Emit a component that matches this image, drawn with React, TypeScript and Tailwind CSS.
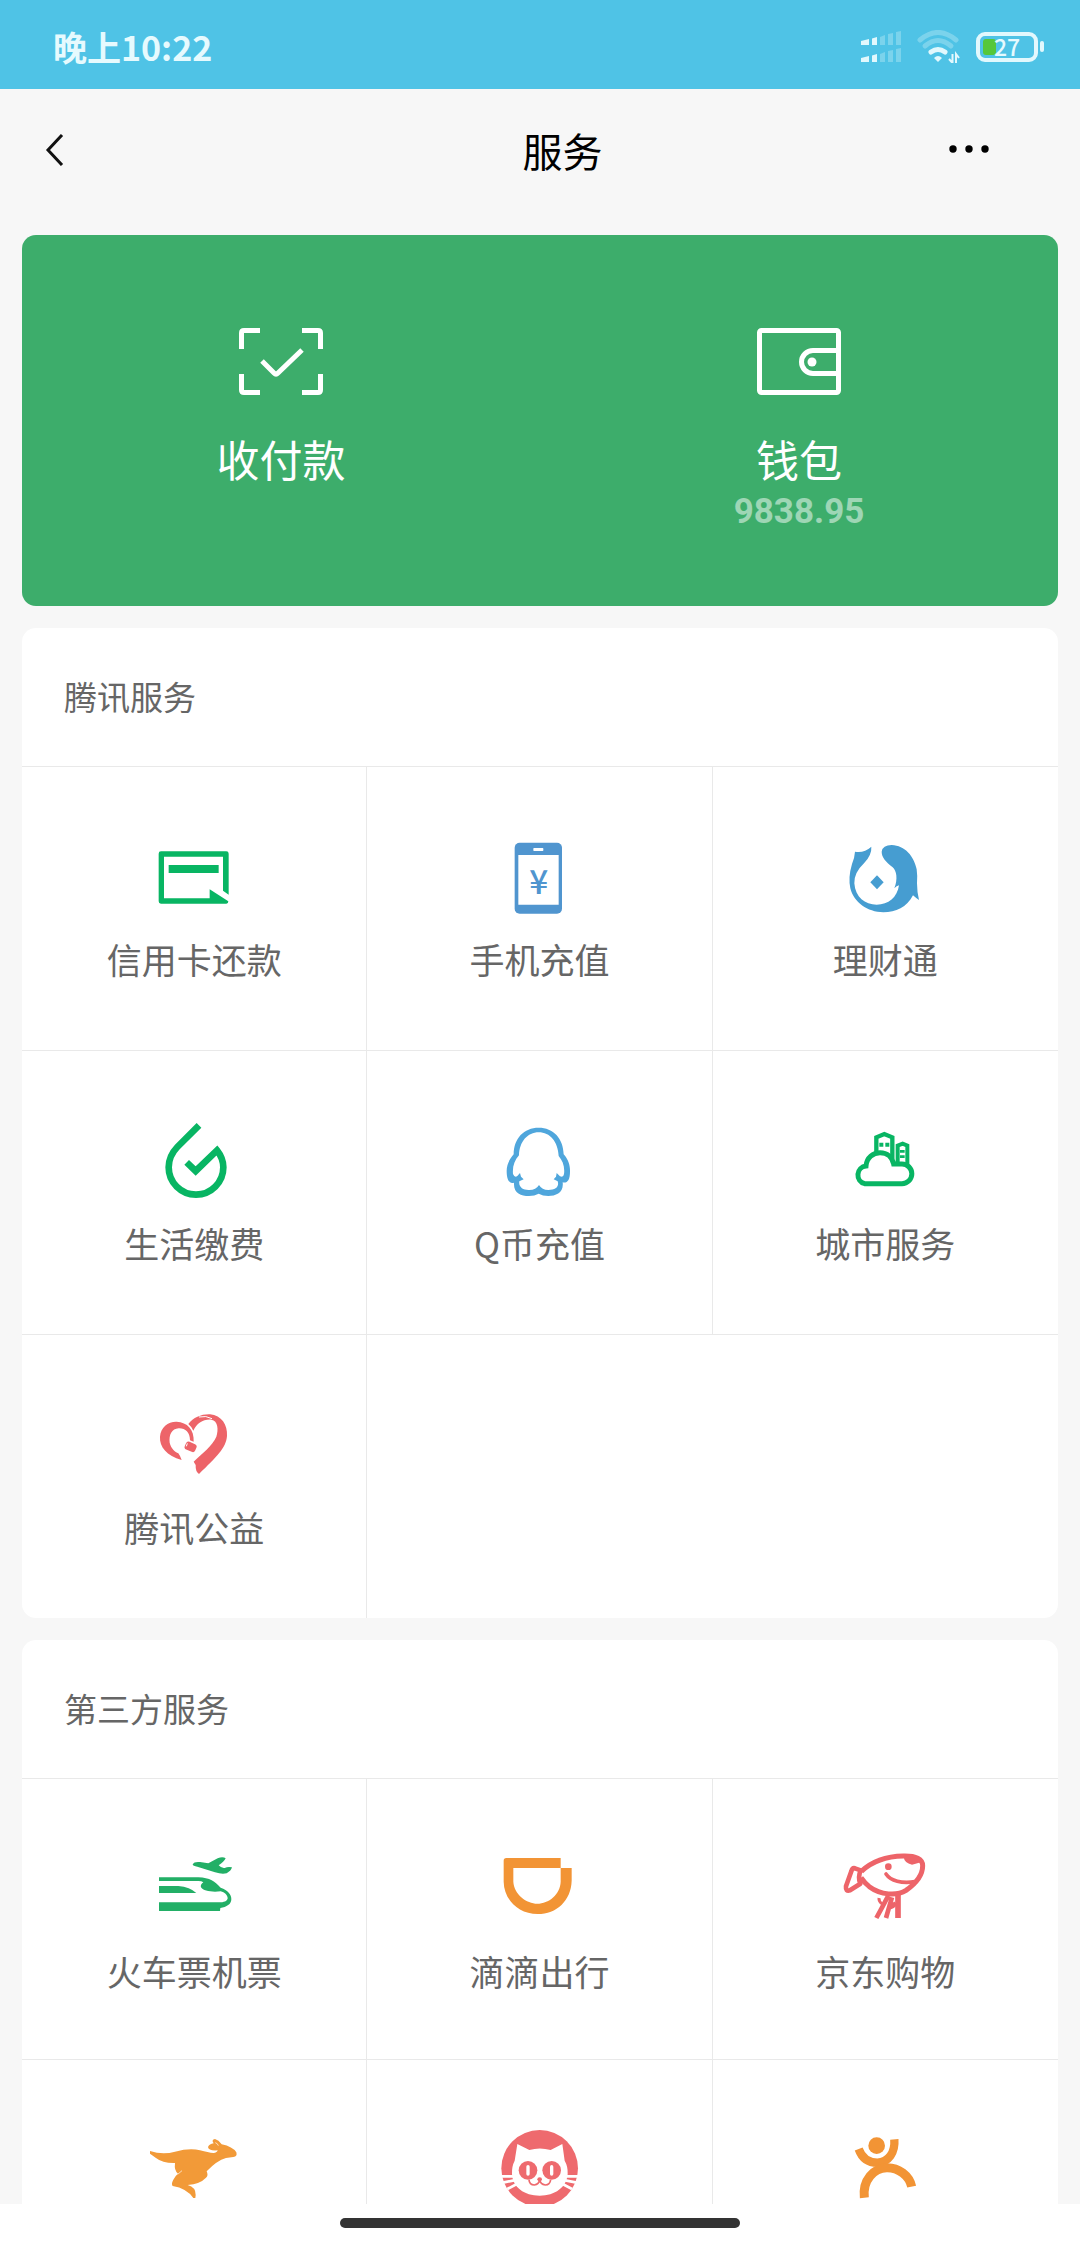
import type { ReactNode } from "react";

const GREEN = "#08b563";
const CORAL = "#ed6469";
const ORANGE = "#f29435";

function Glyph({ viewBox, children }: { viewBox: string; children: ReactNode }) {
  return (
    <svg viewBox={viewBox} className="h-[84px] w-24" fill="none" aria-hidden="true">
      {children}
    </svg>
  );
}

const CreditCard = () => (
  <Glyph viewBox="138 48 288 252">
    <path
      fill={GREEN}
      fillRule="evenodd"
      d="M183 94H379Q386 94 386 101V224L369 212V110H192V235H329V208L385 244Q385 251 379 251H183Q176 251 176 244V101Q176 94 183 94Z"
    />
    <path fill={GREEN} d="M206 135H356V159H206Z" />
  </Glyph>
);

const Phone = () => (
  <Glyph viewBox="1173 48 288 252">
    <rect x="1244" y="68" width="142" height="213" rx="15" fill="#5095cf" />
    <path fill="#fff" d="M1255 105H1376V254H1255Z" />
    <rect x="1300" y="84" width="30" height="9" rx="2" fill="#fff" />
    <text
      x="1316"
      y="221"
      textAnchor="middle"
      fill="#5095cf"
      className="font-['Noto_Sans_CJK_SC',sans-serif] text-[100px] font-medium"
    >
      ¥
    </text>
  </Glyph>
);

const Fish = () => (
  <Glyph viewBox="171 48 288 252">
    <path
      fill="#469dd1"
      d="M225 95Q252 100 274 80Q276 104 252 130Q222 158 223 190C226 232 255 254 290 254C325 254 352 232 357 196Q350 197 343 205C354 178 350 152 338 142C316 124 305 112 305 95Q308 75 335 75C375 77 402 108 410 148Q413 170 411 190Q411 215 417 240Q410 236 399 226C380 262 348 277 310 277C262 276 222 248 211 205Q204 172 216 132Q224 112 225 95Z"
    />
    <path fill="#469dd1" d="M291 166L311 187L291 208L271 187Z" />
  </Glyph>
);

const Drop = () => (
  <Glyph viewBox="138 60 288 252">
    <path
      stroke={GREEN}
      strokeWidth="20"
      d="M297 76L232 141Q206 168 206 202A82 82 0 0 0 370 202Q370 175 351 151L287 213L260 187"
    />
  </Glyph>
);

const Penguin = () => (
  <Glyph viewBox="1173 60 288 252">
    <path
      fill="#4fa6dc"
      fillRule="evenodd"
      d="M1316 83C1360 83 1390 115 1391 163C1405 178 1411 198 1410 215C1410 240 1402 250 1388 247C1392 278 1368 288 1345 288Q1328 288 1316 281Q1304 288 1287 288C1262 288 1240 280 1242 248C1228 252 1220 240 1220 212C1220 195 1228 178 1241 163C1241 115 1272 83 1316 83ZM1316 97C1283 97 1258 125 1257 166C1243 182 1237 200 1239 222Q1244 234 1252 228L1260 219L1263 230L1271 238L1258 244C1255 262 1270 271 1288 270Q1308 270 1317 255Q1326 270 1345 270C1368 270 1378 260 1373 244L1361 238L1368 230L1370 219L1380 229Q1390 234 1392 222C1395 200 1388 182 1376 168C1374 125 1350 97 1316 97Z"
    />
  </Glyph>
);

const City = () => (
  <Glyph viewBox="171 60 288 252">
    <g stroke={GREEN}>
      <path
        strokeWidth="15"
        d="M258 198C260 172 280 158 300 158C322 158 337 172 341 192H366A29 29 0 0 1 366 251H254A27 27 0 0 1 258 198Z"
      />
      <path strokeWidth="13" d="M289 158V112L313 102L337 112V176" />
      <path strokeWidth="12" d="M353 190V137L368 131L382 137V194" />
      <path strokeWidth="12" d="M298 134H310M316 134H328" />
      <path strokeWidth="8" d="M360 154H374M360 170H374" />
    </g>
  </Glyph>
);

const Heart = () => (
  <Glyph viewBox="438 42 288 252">
    <path
      fill={CORAL}
      d="M545 210C500 197 478 170 480 140C482 112 505 94 530 95C562 97 583 118 581 155L570 151C570 126 555 114 536 115C515 116 506 135 509 158C513 176 525 185 535 190Q541 198 545 210Z"
    />
    <path
      fill={CORAL}
      d="M565 102C580 82 605 72 630 73C665 76 683 105 681 138C678 175 650 200 597 252Q586 245 587 225L581 215C605 192 638 166 649 140C656 118 654 92 634 89C610 87 590 100 580 122Q575 110 565 102Z"
    />
    <path stroke="#fff" strokeWidth="3" d="M597 81Q618 76 636 86" />
    <rect x="555" y="158" width="34" height="25" rx="8" fill={CORAL} transform="rotate(24 572 170)" />
    <path stroke="#fff" strokeWidth="3" d="M562 160L559 169" />
  </Glyph>
);

const Train = () => (
  <Glyph viewBox="138 57 288 252">
    <g fill="#22af66">
      <path d="M278 106Q282 97 300 99L325 103L353 88Q368 82 377 88Q372 98 356 109Q366 119 374 117Q384 112 396 115Q394 125 380 133Q366 137 345 130L292 113Q279 112 278 106Z" />
      <path d="M177 145H295C330 146 345 158 362 176C384 184 394 196 394 210C394 226 380 234 361 237L360 246H177V220H362C376 219 383 214 383 207C382 198 374 190 362 187C335 190 310 186 303 175Q300 167 310 160Q305 156 295 156H177Z" />
      <path d="M177 171H235Q270 174 289 192H177Z" />
    </g>
  </Glyph>
);

const Ride = () => (
  <Glyph viewBox="1173 57 288 252">
    <path
      fill={ORANGE}
      fillRule="evenodd"
      d="M1219 87H1382V117H1415V155C1413 215 1370 255 1313 255C1255 255 1212 212 1211 158V95Q1211 87 1219 87ZM1240 117V158C1242 196 1280 224 1312 224C1346 224 1381 196 1382 158V117Z"
    />
  </Glyph>
);

const Dog = () => (
  <Glyph viewBox="171 57 288 252">
    <g stroke={CORAL} strokeLinejoin="round">
      <path
        strokeWidth="15"
        d="M244 127C275 98 320 82 370 81C408 80 428 90 428 110C428 142 405 165 378 184C350 202 302 198 268 173Q252 160 243 146"
      />
      <path strokeWidth="14" d="M242 124L225 118Q217 116 214 127L198 172Q196 188 210 184L241 164Q233 144 242 124Z" />
      <path strokeWidth="11" strokeLinecap="round" d="M318 135C332 156 365 164 405 158" />
      <path strokeWidth="9" d="M297 207Q296 218 306 224" />
      <path strokeWidth="14" d="M325 200L306 236L289 267M336 205L328 232L318 267M326 236Q340 232 348 222" />
      <path strokeWidth="17" d="M354 198V267" />
    </g>
    <circle cx="325" cy="113" r="10" fill={CORAL} />
    <path fill={CORAL} d="M371 84Q373 102 396 107Q412 103 428 98L412 84Z" />
  </Glyph>
);

const Kangaroo = () => (
  <Glyph viewBox="138 60 288 252">
    <path
      fill="#f29a38"
      d="M150 126Q188 138 225 128Q270 116 300 124Q325 131 340 132Q352 131 353 124Q325 126 324 114Q328 105 341 103Q333 92 345 90Q356 93 365 106Q398 113 409 130Q413 143 400 144L378 147Q350 155 320 187Q326 200 318 206Q300 225 263 228Q288 235 287 258L286 267H280Q260 238 218 231Q213 225 220 212Q226 200 234 194Q222 185 225 162Q188 163 168 147L150 134Z"
    />
    <path stroke="#fff" strokeWidth="2" d="M346 101Q353 103 355 110M233 196L246 185" />
  </Glyph>
);

const Cat = () => (
  <Glyph viewBox="1173 60 288 252">
    <circle cx="1319" cy="178" r="115" fill="#ee6a6e" />
    <path
      fill="#fff"
      d="M1252 105L1288 123Q1319 114 1352 123L1387 105L1394 155Q1404 172 1403 195C1400 235 1365 260 1319 260C1273 260 1238 235 1236 195Q1235 172 1244 155Z"
    />
    <path
      stroke="#fff"
      strokeWidth="8"
      d="M1202 202H1240M1208 221L1242 214M1222 240L1256 222M1436 202H1398M1430 221L1396 214M1416 240L1382 222"
    />
    <circle cx="1284" cy="184" r="28" fill="#ee6a6e" />
    <circle cx="1355" cy="184" r="28" fill="#ee6a6e" />
    <rect x="1279" y="168" width="10" height="32" rx="5" fill="#fff" />
    <rect x="1350" y="168" width="10" height="32" rx="5" fill="#fff" />
    <ellipse cx="1319" cy="211" rx="7" ry="6" fill="#ee6a6e" />
    <path stroke="#ee6a6e" strokeWidth="5" d="M1287 212Q1288 228 1303 228Q1317 226 1319 212Q1321 226 1336 228Q1350 228 1352 212" />
  </Glyph>
);

const Dancer = () => (
  <Glyph viewBox="171 60 288 252">
    <circle cx="290" cy="110" r="25" fill={ORANGE} />
    <path stroke={ORANGE} strokeWidth="25" d="M236 120C246 148 266 161 292 161C326 160 346 130 343 91" />
    <path stroke={ORANGE} strokeWidth="27" d="M253 266C247 212 282 177 320 176C355 175 388 200 395 233" />
  </Glyph>
);

type Service = { label: string; icon: () => ReactNode; hideLabel?: boolean };

const tencentRows: Service[][] = [
  [
    { label: "信用卡还款", icon: CreditCard },
    { label: "手机充值", icon: Phone },
    { label: "理财通", icon: Fish },
  ],
  [
    { label: "生活缴费", icon: Drop },
    { label: "Q币充值", icon: Penguin },
    { label: "城市服务", icon: City },
  ],
  [{ label: "腾讯公益", icon: Heart }],
];

const partnerRows: Service[][] = [
  [
    { label: "火车票机票", icon: Train },
    { label: "滴滴出行", icon: Ride },
    { label: "京东购物", icon: Dog },
  ],
  [
    { label: "外卖", icon: Kangaroo, hideLabel: true },
    { label: "电影", icon: Cat, hideLabel: true },
    { label: "点评", icon: Dancer, hideLabel: true },
  ],
];

function ServiceCard({ title, rows, rowHeight }: { title: string; rows: Service[][]; rowHeight: string }) {
  return (
    <section className="shrink-0 overflow-hidden rounded-[14px] bg-white text-[#666]">
      <h2 className="px-[42px] pt-11 pb-[46px] text-[33px] leading-[48px]">{title}</h2>
      {rows.map((row, i) => (
        <div key={i} className="grid grid-cols-3 border-t border-[#e9e9e9]">
          {row.map(({ label, icon: Icon, hideLabel }) => (
            <button
              key={label}
              type="button"
              aria-label={label}
              className={`flex ${rowHeight} flex-col items-center border-r border-[#e9e9e9] pt-[69px] nth-3:border-r-0`}
            >
              <Icon />
              {!hideLabel && <span className="mt-[15px] text-[35px] leading-[48px]">{label}</span>}
            </button>
          ))}
        </div>
      ))}
    </section>
  );
}

function StatusBar() {
  return (
    <div className="flex h-[89px] shrink-0 items-center justify-between bg-[#4fc3e6] pt-1 pr-9 pl-[53px] text-[#e6fafe]">
      <span className="text-[34px] leading-[48px] font-bold">晚上10:22</span>
      <div className="flex items-center gap-4">
        <svg viewBox="862 32 40 31" className="h-[31px] w-10" aria-hidden="true">
          <g fill="#e2f8fd">
            <path d="M862 42L870 40V46H862ZM873 39.5L878 38V46H873ZM862 59L870 57V63H862ZM873 56.500L878 55V63H873Z" />
            <path
              opacity=".3"
              d="M881 38L886 36V46H881ZM889 35L894 34V46H889ZM897 33L902 32V46H897ZM881 55L886 53V63H881ZM889 52L894 51V63H889ZM897 50L902 49V63H897Z"
            />
          </g>
        </svg>
        <svg viewBox="918 32 43 33" className="h-[33px] w-[43px]" fill="none" aria-hidden="true">
          <g stroke="#e2f8fd" strokeWidth="5" strokeLinecap="round">
            <path opacity=".3" d="M921 42Q939 27 957 42" />
            <path opacity=".3" d="M926 48Q939 37 952 48" />
            <path d="M932 54Q939 49 946 54" />
          </g>
          <path fill="#e2f8fd" d="M935 60Q939 56 943 60L939 64Z" />
          <path stroke="#e2f8fd" strokeWidth="2" d="M953.500 56V65L950 61M957 65V56L960 60" />
        </svg>
        <div className="flex items-center gap-0.5">
          <div className="relative flex h-[30px] w-[62px] items-center justify-center rounded-[9px] border-4 border-[#e2f8fd]">
            <span className="absolute inset-y-[3px] left-[3px] w-[13px] rounded-[3px] bg-[#56c73a]" />
            <span className="relative text-[23px] leading-none font-medium">27</span>
          </div>
          <span className="h-[11px] w-1 rounded-sm bg-[#e2f8fd]" />
        </div>
      </div>
    </div>
  );
}

export default function App() {
  return (
    <div className="flex h-screen flex-col bg-[#f7f7f7] font-['Noto_Sans_CJK_SC',sans-serif]">
      <StatusBar />
      <header className="grid shrink-0 grid-cols-[1fr_auto_1fr] items-center pt-[33px] pb-[37px] pl-[45px] text-black">
        <button type="button" aria-label="返回" className="justify-self-start">
          <svg viewBox="0 0 19 32" className="h-8 w-[19px]" fill="none" stroke="#111" strokeWidth="3" aria-hidden="true">
            <path d="M17 1L3 16L17 31" />
          </svg>
        </button>
        <h1 className="text-[40px] leading-[56px]">服务</h1>
        <button type="button" aria-label="更多" className="mr-[89px] justify-self-end">
          <svg viewBox="0 0 42 14" className="h-3.5 w-[42px]" aria-hidden="true">
            <circle cx="4" cy="6" r="3.7" />
            <circle cx="20" cy="6" r="3.7" />
            <circle cx="36" cy="6" r="3.7" />
          </svg>
        </button>
      </header>

      <main className="flex min-h-0 flex-1 flex-col gap-[22px] overflow-y-auto px-[22px] pt-5 [scrollbar-width:none]">
        <section className="grid shrink-0 grid-cols-2 items-start rounded-[14px] bg-[#3dad6b] pt-[93px] pb-[72px] text-white">
          <button type="button" className="flex flex-col items-center">
            <svg viewBox="0 0 84 67" className="h-[67px] w-[84px]" fill="none" stroke="#fff" strokeWidth="5" aria-hidden="true">
              <path d="M21 2.500H5Q2.500 2.500 2.500 5V21M63 2.500H79Q81.500 2.500 81.500 5V21M2.500 46V62Q2.500 64.500 5 64.500H21M63 64.500H79Q81.500 64.500 81.500 62V46" />
              <path d="M23 33L35 45Q37 47 39 45L63 22" />
            </svg>
            <span className="mt-[35px] text-[43px] leading-[56px]">收付款</span>
          </button>
          <button type="button" className="flex flex-col items-center">
            <svg viewBox="0 0 84 67" className="h-[67px] w-[84px]" fill="none" stroke="#fff" strokeWidth="5" aria-hidden="true">
              <rect x="2.500" y="2.500" width="79" height="62" rx="2" />
              <path d="M81 22.500H56A11.500 11.500 0 0 0 56 45.500H81" />
              <circle cx="55" cy="34" r="4.500" fill="#fff" stroke="none" />
            </svg>
            <span className="mt-[35px] text-[43px] leading-[56px]">钱包</span>
            <span className="mt-1 font-[Roboto,sans-serif] text-[35px] leading-[44px] font-bold text-white/50">9838.95</span>
          </button>
        </section>
        <ServiceCard title="腾讯服务" rows={tencentRows} rowHeight="min-h-[283px]" />
        <ServiceCard title="第三方服务" rows={partnerRows} rowHeight="min-h-[280px]" />
      </main>

      <footer className="flex h-11 shrink-0 justify-center bg-white pt-3.5">
        <span className="h-2.5 w-[37%] rounded-full bg-[#333]" />
      </footer>
    </div>
  );
}
